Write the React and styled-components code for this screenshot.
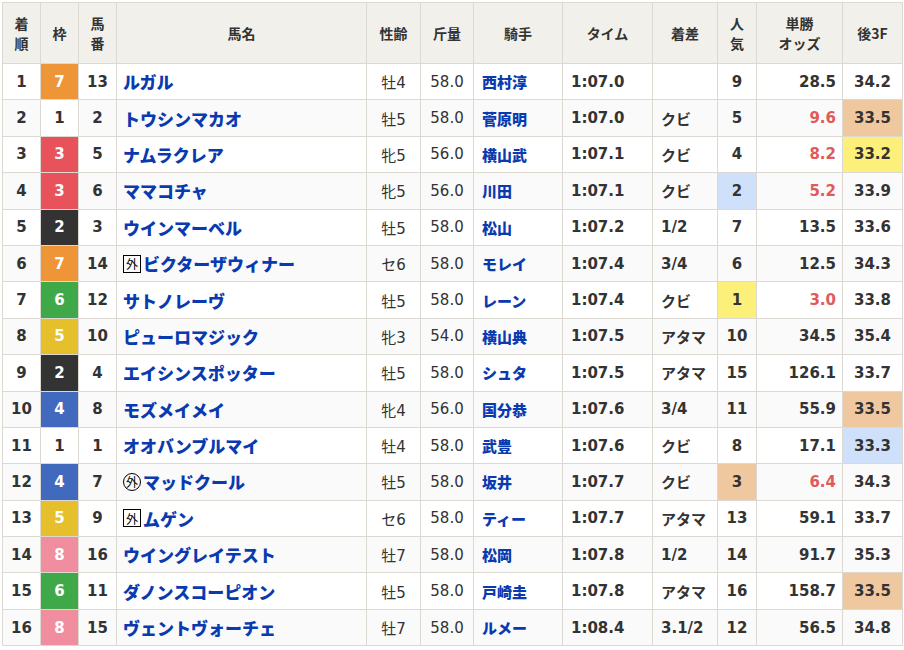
import React from "react";
import styled, { createGlobalStyle } from "styled-components";

const G = createGlobalStyle`
  body { margin: 0; background: #fff; font-family: "DejaVu Sans", "Noto Sans CJK JP", sans-serif; }
`;
const Wrap = styled.div` padding: 2px 0 0 2px; `;
const Table = styled.table`
  border-collapse: collapse; table-layout: fixed; width: 900px;
  color: #333; font-size: 15px;
  th, td { border: 1px solid #dcd9d2; }
`;
const Th = styled.th`
  background: #f2f0eb; height: 60px; font-weight: bold; font-size: 14px;
  line-height: 20px; padding: 0; text-align: center;
  font-family: "Noto Sans CJK JP", sans-serif;
`;
const Td = styled.td`
  height: 35.4px; padding: 0 ${p => p.$pad || 0}px; font-weight: ${p => (p.$light ? "normal" : "bold")};
  text-align: ${p => p.$align || "center"};
  background: ${p => p.$bg || "transparent"};
  color: ${p => p.$color || "#333"};
  white-space: nowrap;
`;
const Tr = styled.tr` background: ${p => (p.$alt ? "#fafafa" : "#fff")}; `;
const Name = styled.span`
  color: #0a3ab0; font-weight: 900; font-size: 17px;
  font-family: "Noto Sans CJK JP", sans-serif; display: inline-flex; align-items: center;
`;
const Jockey = styled.span` color: #0a3ab0; font-weight: 900; font-family: "Noto Sans CJK JP", sans-serif; `;
const Jp = styled.span` font-family: "Noto Sans CJK JP", sans-serif; `;
const Mark = styled.span`
  display: inline-flex; align-items: center; justify-content: center;
  width: 16px; height: 16px; font-size: 12px; color: #000; margin-right: 2px;
  border: 1px solid #000; border-radius: ${p => (p.$round ? "50%" : "0")}; font-weight: normal;
`;

const wakuColor = { 1: ["#fff", "#333"], 2: ["#333", "#fff"], 3: ["#e8535b", "#fff"], 4: ["#4169bd", "#fff"], 5: ["#e6c02c", "#fff"], 6: ["#3fa94a", "#fff"], 7: ["#ee9637", "#fff"], 8: ["#f08ea0", "#fff"] };
const HL = { o: "#f0c8a0", y: "#fdf07a", b: "#cfe0fb" };
const rows = [
  [1,7,13,"ルガル","","牡4","58.0","西村淳","1:07.0","",9,"28.5","34.2","","",""],
  [2,1,2,"トウシンマカオ","","牡5","58.0","菅原明","1:07.0","クビ",5,"9.6","33.5","","r","o"],
  [3,3,5,"ナムラクレア","","牝5","56.0","横山武","1:07.1","クビ",4,"8.2","33.2","","r","y"],
  [4,3,6,"ママコチャ","","牝5","56.0","川田","1:07.1","クビ",2,"5.2","33.9","b","r",""],
  [5,2,3,"ウインマーベル","","牡5","58.0","松山","1:07.2","1/2",7,"13.5","33.6","","",""],
  [6,7,14,"ビクターザウィナー","sq","セ6","58.0","モレイ","1:07.4","3/4",6,"12.5","34.3","","",""],
  [7,6,12,"サトノレーヴ","","牡5","58.0","レーン","1:07.4","クビ",1,"3.0","33.8","y","r",""],
  [8,5,10,"ピューロマジック","","牝3","54.0","横山典","1:07.5","アタマ",10,"34.5","35.4","","",""],
  [9,2,4,"エイシンスポッター","","牡5","58.0","シュタ","1:07.5","アタマ",15,"126.1","33.7","","",""],
  [10,4,8,"モズメイメイ","","牝4","56.0","国分恭","1:07.6","3/4",11,"55.9","33.5","","","o"],
  [11,1,1,"オオバンブルマイ","","牡4","58.0","武豊","1:07.6","クビ",8,"17.1","33.3","","","b"],
  [12,4,7,"マッドクール","ci","牡5","58.0","坂井","1:07.7","クビ",3,"6.4","34.3","o","r",""],
  [13,5,9,"ムゲン","sq","セ6","58.0","ティー","1:07.7","アタマ",13,"59.1","33.7","","",""],
  [14,8,16,"ウイングレイテスト","","牡7","58.0","松岡","1:07.8","1/2",14,"91.7","35.3","","",""],
  [15,6,11,"ダノンスコーピオン","","牡5","58.0","戸崎圭","1:07.8","アタマ",16,"158.7","33.5","","","o"],
  [16,8,15,"ヴェントヴォーチェ","","牡7","58.0","ルメー","1:08.4","3.1/2",12,"56.5","34.8","","",""],
];
const widths = [38,38,38,250,54,53,89,90,65,39,86,60];

export default function App() {
  return (
    <Wrap>
      <G />
      <Table>
        <colgroup>{widths.map((w, i) => <col key={i} style={{ width: w }} />)}</colgroup>
        <thead>
          <tr>
            <Th>着<br />順</Th><Th>枠</Th><Th>馬<br />番</Th><Th>馬名</Th><Th>性齢</Th><Th>斤量</Th>
            <Th>騎手</Th><Th>タイム</Th><Th>着差</Th><Th>人<br />気</Th><Th>単勝<br />オッズ</Th><Th>後3F</Th>
          </tr>
        </thead>
        <tbody>
          {rows.map((r, i) => {
            const [bg, fg] = wakuColor[r[1]];
            return (
              <Tr key={i} $alt={i % 2 === 1}>
                <Td>{r[0]}</Td>
                <Td $bg={bg} $color={fg}>{r[1]}</Td>
                <Td>{r[2]}</Td>
                <Td $align="left" $pad={6}>
                  <Name>{r[4] && <Mark $round={r[4] === "ci"}>外</Mark>}{r[3]}</Name>
                </Td>
                <Td $light><Jp>{r[5].slice(0, 1)}</Jp>{r[5].slice(1)}</Td>
                <Td $light>{r[6]}</Td>
                <Td $align="left" $pad={8}><Jockey>{r[7]}</Jockey></Td>
                <Td $align="left" $pad={8}>{r[8]}</Td>
                <Td $align="left" $pad={8}>{r[9]}</Td>
                <Td $bg={HL[r[13]]}>{r[10]}</Td>
                <Td $align="right" $pad={6} $color={r[14] ? "#e05a5a" : "#333"}>{r[11]}</Td>
                <Td $bg={HL[r[15]]}>{r[12]}</Td>
              </Tr>
            );
          })}
        </tbody>
      </Table>
    </Wrap>
  );
}
